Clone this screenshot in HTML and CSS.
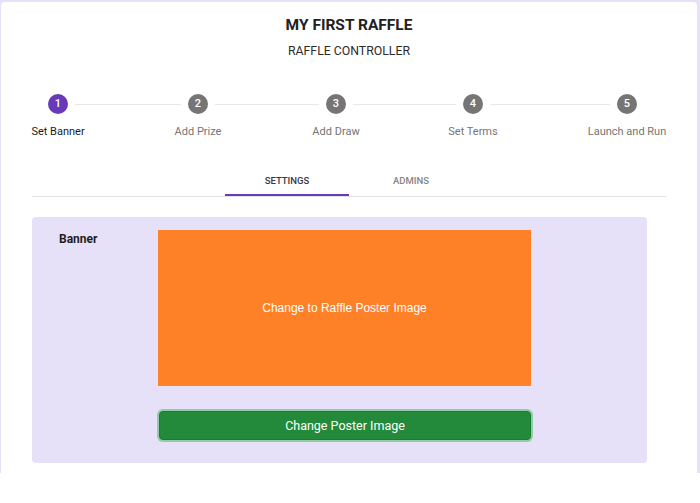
FILE: index.html
```html
<!DOCTYPE html>
<html lang="en">
<head>
    <meta charset="UTF-8">
    <meta name="viewport" content="width=device-width, initial-scale=1.0">
    <title>My First Raffle</title>
    <link rel="stylesheet" href="styles.css">
</head>
<body>
    <div class="frame">
        <div class="card">
            <h1 class="title">MY FIRST RAFFLE</h1>
            <div class="subtitle">RAFFLE CONTROLLER</div>

            <div class="stepper">
                <div class="step active">
                    <span class="step-icon">1</span>
                    <span class="step-label">Set Banner</span>
                </div>
                <div class="connector"></div>
                <div class="step">
                    <span class="step-icon">2</span>
                    <span class="step-label">Add Prize</span>
                </div>
                <div class="connector"></div>
                <div class="step">
                    <span class="step-icon">3</span>
                    <span class="step-label">Add Draw</span>
                </div>
                <div class="connector"></div>
                <div class="step">
                    <span class="step-icon">4</span>
                    <span class="step-label">Set Terms</span>
                </div>
                <div class="connector"></div>
                <div class="step">
                    <span class="step-icon">5</span>
                    <span class="step-label">Launch and Run</span>
                </div>
            </div>

            <div class="tabs">
                <div class="tab selected">SETTINGS</div>
                <div class="tab">ADMINS</div>
            </div>

            <div class="panel">
                <div class="field-label">Banner</div>
                <div class="field-body">
                    <div class="poster">Change to Raffle Poster Image</div>
                    <button class="poster-button">Change Poster Image</button>
                </div>
            </div>
        </div>
    </div>
</body>
</html>
```

FILE: styles.css
```css
body {
    margin: 0;
    background-color: #ffffff;
    font-family: Roboto, "Noto Sans", sans-serif;
}
.frame {
    background-color: #e6e1f8;
    height: 473px;
    padding: 2px 3px 0 1px;
    box-sizing: border-box;
}
.card {
    background-color: #ffffff;
    height: 471px;
    border-radius: 4px 4px 0 0;
    padding: 0 31px;
    overflow: hidden;
}
.title {
    margin: 0;
    padding-top: 14px;
    font-size: 15.5px;
    line-height: 18px;
    font-weight: 700;
    color: #212121;
    text-align: center;
}
.subtitle {
    margin-top: 9px;
    font-size: 12.3px;
    line-height: 16px;
    color: #2b2b2b;
    text-align: center;
}
.stepper {
    display: grid;
    grid-template-columns: 20px 120px 20px 118px 20px 117px 20px 134px 20px;
    margin: 35px 0 0 16px;
}
.step {
    display: flex;
    flex-direction: column;
    align-items: center;
    width: 20px;
}
.step-icon {
    width: 20px;
    height: 20px;
    border-radius: 50%;
    background-color: #757575;
    color: #ffffff;
    font-size: 11px;
    font-weight: 500;
    line-height: 20px;
    text-align: center;
}
.step.active .step-icon {
    background-color: #673ab7;
}
.step-label {
    margin-top: 11px;
    font-size: 11px;
    line-height: 14px;
    white-space: nowrap;
    color: #757575;
}
.step.active .step-label {
    color: #1a1a1a;
}
.connector {
    margin: 10px 7px 0;
    height: 1px;
    background-color: #e8e8e8;
}
.tabs {
    display: flex;
    justify-content: center;
    margin-top: 27px;
    border-bottom: 1px solid #e2e2e2;
}
.tab {
    width: 124px;
    height: 28px;
    line-height: 30px;
    text-align: center;
    font-size: 9.5px;
    font-weight: 500;
    color: #858585;
    border-bottom: 2px solid transparent;
}
.tab.selected {
    color: #3a3a3a;
    border-bottom-color: #673ab7;
}
.panel {
    display: flex;
    width: 615px;
    height: 246px;
    margin-top: 20px;
    padding: 13px 0 0 27px;
    box-sizing: border-box;
    background-color: #e6e0f8;
    border-radius: 4px;
}
.field-label {
    width: 99px;
    margin-top: 1px;
    font-size: 12px;
    line-height: 16px;
    font-weight: 700;
    color: #1f1f1f;
}
.field-body {
    display: flex;
    flex-direction: column;
    align-items: flex-start;
}
.poster {
    width: 373px;
    height: 156px;
    background-color: #fe8027;
    color: #ffffff;
    font-family: "Liberation Sans", Arial, sans-serif;
    font-size: 12px;
    display: flex;
    align-items: center;
    justify-content: center;
}
.poster-button {
    width: 372px;
    height: 29px;
    margin: 25px 0 0 1px;
    padding: 0;
    border: 1px solid #1c7a33;
    border-radius: 4px;
    background-color: #228a3a;
    box-shadow: 0 0 0 2px #92cba5;
    color: #ffffff;
    font-family: Roboto, sans-serif;
    font-size: 12.5px;
    cursor: pointer;
}
```
